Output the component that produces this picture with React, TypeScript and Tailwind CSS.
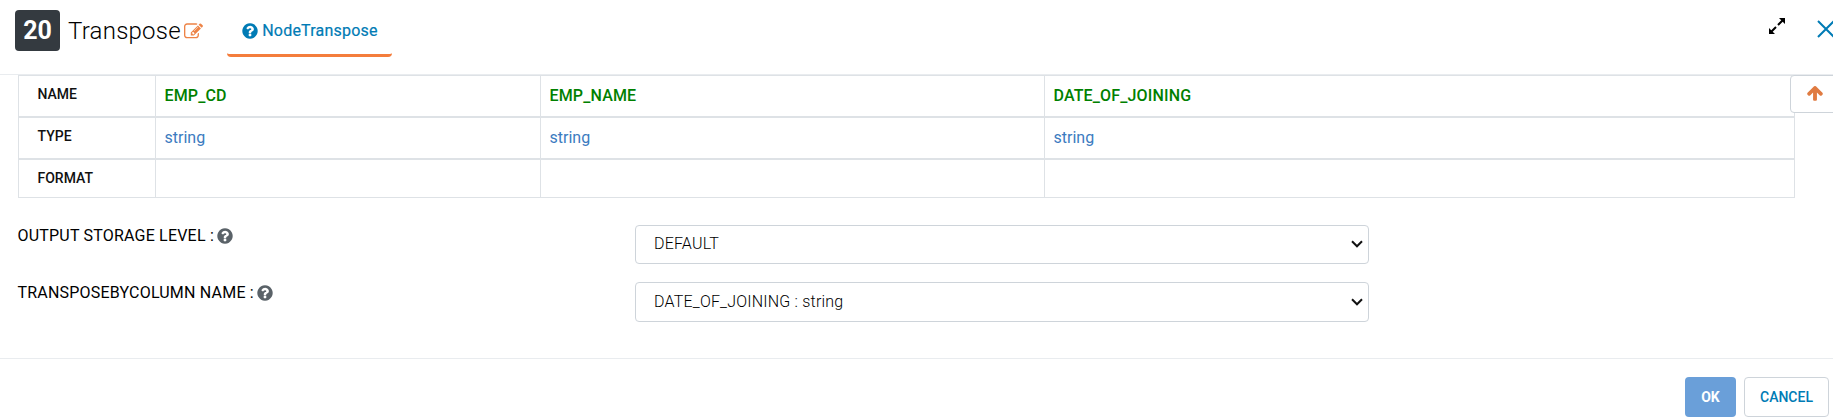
import type { ReactNode } from 'react';

const QUESTION =
  'M1024 1376v-192q0-14-9-23t-23-9h-192q-14 0-23 9t-9 23v192q0 14 9 23t23 9h192q14 0 23-9t9-23zm256-672q0-88-55.5-163t-138.5-116-170-41q-243 0-371 213-15 24 8 42l132 100q7 6 19 6 16 0 25-12 53-68 86-92 34-24 86-24 48 0 85.5 26t37.5 59q0 38-20 61t-68 45q-63 28-115.5 86.5t-52.5 125.5v36q0 14 9 23t23 9h192q14 0 23-9t9-23q0-19 21.5-49.5t54.5-49.5q32-18 49-28.5t46-35 44.5-48 28-60.5 12.5-81zm384 192q0 209-103 385.5t-279.500 279.5-385.5 103-385.5-103-279.5-279.5-103-385.5 103-385.5 279.5-279.5 385.5-103 385.5 103 279.5 279.5 103 385.5z';
const EDIT =
  'M888 1184l116-116-152-152-116 116v56h96v96h56zm440-720q-16-16-33 1l-350 350q-17 17-1 33t33-1l350-350q17-17 1-33zm80 594v190q0 119-84.5 203.5t-203.5 84.5h-832q-119 0-203.5-84.5t-84.5-203.5v-832q0-119 84.5-203.5t203.5-84.5h832q63 0 117 25 15 7 18 23 3 17-9 29l-49 49q-14 14-32 8-23-6-45-6h-832q-66 0-113 47t-47 113v832q0 66 47 113t113 47h832q66 0 113-47t47-113v-126q0-13 9-22l64-64q15-15 35-7t20 29zm-96-738l288 288-672 672h-288v-288zm444 132l-92 92-288-288 92-92q28-28 68-28t68 28l152 152q28 28 28 68t-28 68z';
const ARROW_UP =
  'M1675 971q0 51-37 90l-75 75q-38 38-91 38-54 0-90-38l-294-293v704q0 52-37.5 84.5t-90.5 32.5h-128q-53 0-90.5-32.5t-37.5-84.5v-704l-294 293q-36 38-90 38t-90-38l-75-75q-38-38-38-90 0-53 38-91l651-651q35-37 90-37 54 0 91 37l651 651q37 39 37 91z';

function Glyph({ d, className }: { d: string; className: string }) {
  return (
    <svg viewBox="0 0 1792 1792" fill="currentColor" className={`shrink-0 ${className}`}>
      <path d={d} />
    </svg>
  );
}

const columns = [
  { name: 'EMP_CD', type: 'string' },
  { name: 'EMP_NAME', type: 'string' },
  { name: 'DATE_OF_JOINING', type: 'string' },
];

function SchemaRow({ label, height, children }: { label: string; height: string; children: ReactNode }) {
  return (
    <div
      className={`grid grid-cols-[137px_385px_504px_1fr] divide-x divide-[#dee2e6] border border-[#dee2e6] ${height}`}
    >
      <div className="pt-[8px] pl-[18.5px] text-[14px] leading-5 font-medium text-[#111]">{label}</div>
      {children}
    </div>
  );
}

function SelectRow({ label, value, height }: { label: string; value: string; height: string }) {
  return (
    <div className="flex items-start">
      <div className="-ml-[0.5px] flex w-[617.5px] items-center gap-[2.5px] text-[16px] leading-[22px] tracking-[0.2px] text-black">
        <span>{label}</span>
        <Glyph d={QUESTION} className="size-[18px] text-[#5a6268]" />
      </div>
      <button
        className={`flex w-[734px] items-center justify-between rounded border border-[#ced4da] bg-white pr-[5px] pb-px pl-[18px] text-[16px] tracking-[0.2px] ${height}`}
      >
        <span className="font-light text-black">{value}</span>
        <svg viewBox="0 0 12 8" className="h-2 w-3" fill="none" stroke="#111" strokeWidth="2">
          <path d="M1 1.3l5 5 5-5" />
        </svg>
      </button>
    </div>
  );
}

export default function App() {
  return (
    <div className="flex h-[420px] w-full flex-col overflow-hidden bg-white font-[Roboto,sans-serif]">
      <header className="flex h-[75px] shrink-0 items-start border-b border-[#e9ecef] pl-[15px]">
        <div className="mt-[10px] flex h-[41px] w-[45px] items-center justify-center rounded bg-[#343a40] text-[25px] font-bold text-white">
          20
        </div>
        <h1 className="mt-[15px] ml-[8px] w-[114px] text-[24px] leading-[33px] font-light tracking-[0.25px] whitespace-nowrap text-black">
          Transpose
        </h1>
        <Glyph d={EDIT} className="mt-[22px] ml-[2px] size-[19px] text-[#ed8346]" />
        <div className="mt-[5px] ml-[24px] flex h-[52px] w-[165px] items-center justify-center gap-[3px] rounded border-b-3 border-[#f47d3c] pt-[3px] text-[16px] tracking-[0.22px] text-[#007bb5]">
          <Glyph d={QUESTION} className="-mt-px size-[18px]" />
          <span className="[-webkit-text-stroke:0.2px]">NodeTranspose</span>
        </div>
        <div className="mr-[-2px] ml-auto flex items-start gap-[32px]">
          <svg viewBox="0 0 16 16" className="mt-[18px] size-4" fill="none" stroke="#000" strokeWidth="2">
            <path d="M10 0H16V6ZM0 10V16H6Z" fill="#000" stroke="none" />
            <path d="M14 2L9 7M7 9L2 14" />
          </svg>
          <svg viewBox="0 0 18 18" className="mt-[20px] size-[18px]" fill="none" stroke="#007bb5" strokeWidth="2">
            <path d="M1 1L17 17M17 1L1 17" />
          </svg>
        </div>
      </header>

      <main className="relative h-[284px] shrink-0 border-b border-[#e9ecef] pl-[18px]">
        <div className="w-[1777px]">
          <SchemaRow label="NAME" height="h-[42px]">
            {columns.map((c) => (
              <div
                key={c.name}
                className="pt-[8px] pl-[8.5px] text-[16px] leading-6 font-medium tracking-[0.15px] text-[#008000]"
              >
                {c.name}
              </div>
            ))}
          </SchemaRow>
          <SchemaRow label="TYPE" height="h-[42px]">
            {columns.map((c) => (
              <div key={c.name} className="pt-[8px] pl-[8.5px] text-[16px] leading-6 text-[#3b7bbf]">
                {c.type}
              </div>
            ))}
          </SchemaRow>
          <SchemaRow label="FORMAT" height="h-[39px]">
            {columns.map((c) => (
              <div key={c.name} />
            ))}
          </SchemaRow>
        </div>
        <div className="mt-[27px] flex flex-col gap-[18px]">
          <SelectRow label="OUTPUT STORAGE LEVEL :" value="DEFAULT" height="h-[39px]" />
          <SelectRow label="TRANSPOSEBYCOLUMN NAME :" value="DATE_OF_JOINING : string" height="h-[40px]" />
        </div>
        <button className="absolute top-0 right-[-8px] flex h-[38px] w-[51px] items-center justify-center rounded border border-[#ced4da] bg-white pr-px pb-[3px] text-[#e07b41]">
          <Glyph d={ARROW_UP} className="size-[18px]" />
        </button>
      </main>

      <footer className="flex justify-end gap-2 pt-[18px] pr-[4px] text-[14px]">
        <button className="h-10 w-[51px] rounded bg-[#6a9fd9] font-bold text-white">OK</button>
        <button className="h-10 w-[85px] rounded border border-[#ced4da] font-medium text-[#007bb5]">CANCEL</button>
      </footer>
    </div>
  );
}
